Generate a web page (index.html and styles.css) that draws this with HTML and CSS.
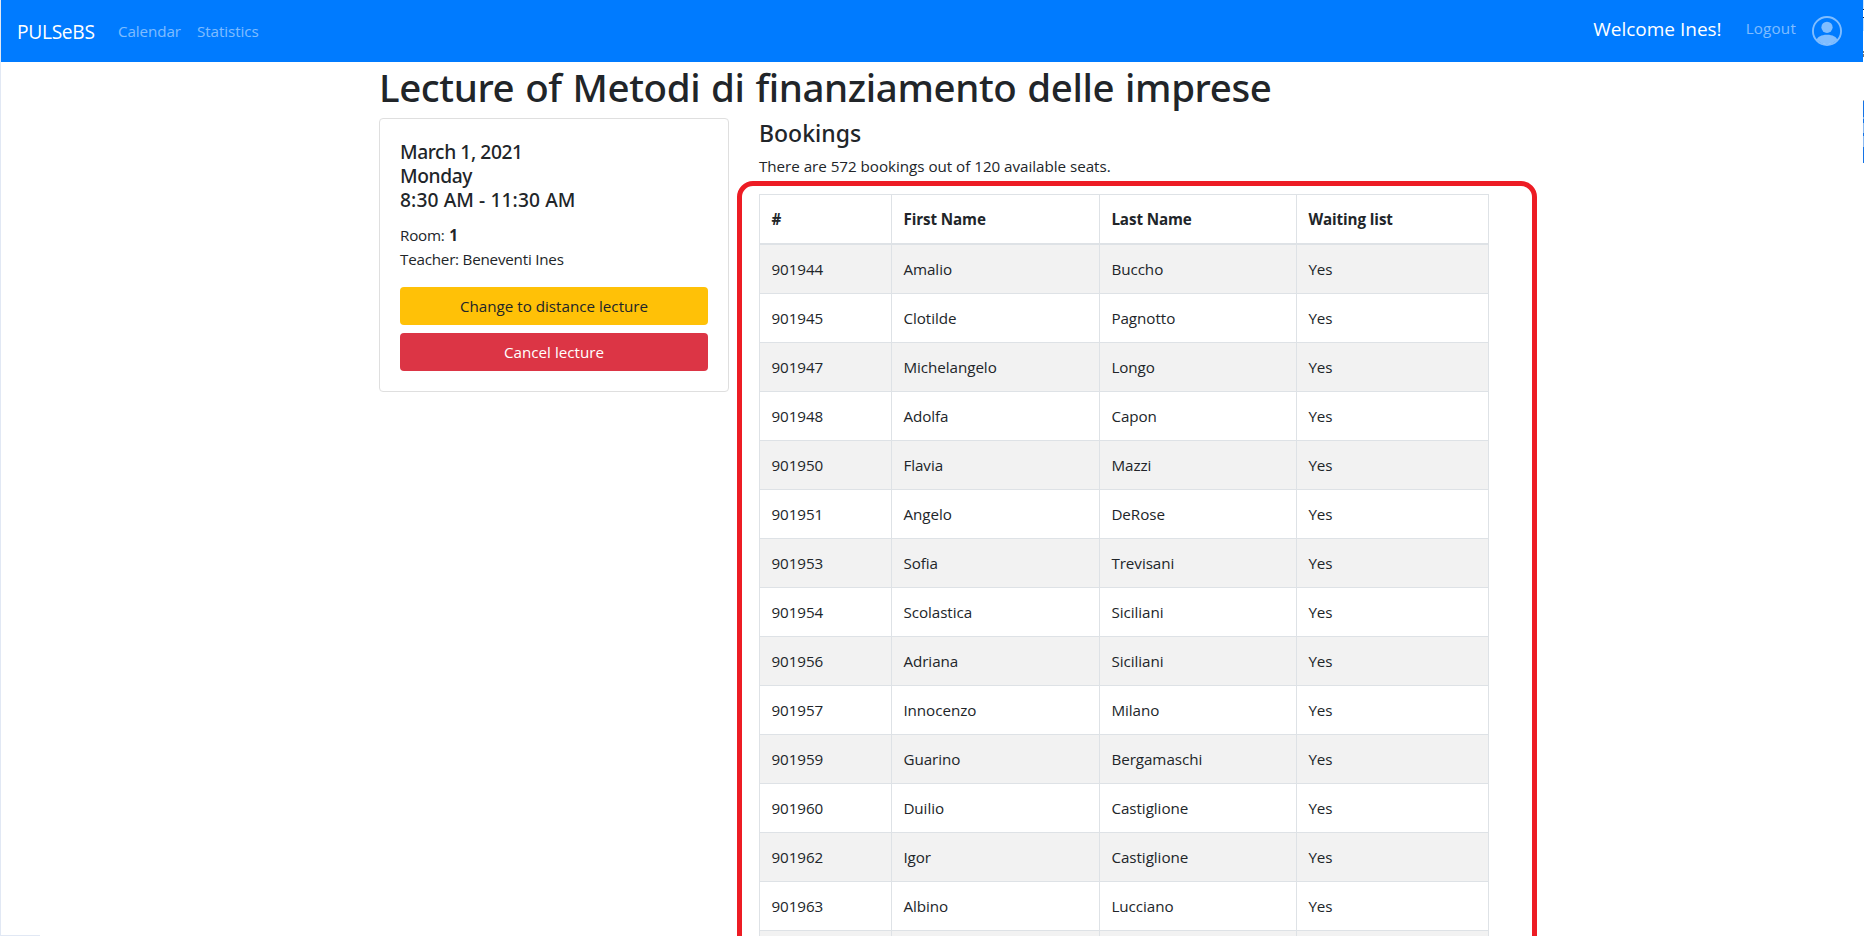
FILE: index.html
```
<!DOCTYPE html>
<html lang="en">
<head>
<meta charset="utf-8">
<title>PULSeBS</title>
<link rel="stylesheet" href="styles.css">
</head>
<body>
<div class="page">
  <nav class="navbar">
    <a class="brand">PULSeBS</a>
    <a class="nav-link">Calendar</a>
    <a class="nav-link">Statistics</a>
    <div class="user">
      <span class="welcome">Welcome Ines!</span>
      <a class="logout">Logout</a>
      <svg class="avatar" viewBox="0 0 16 16" width="30" height="30" fill="currentColor">
        <path d="M13.468 12.37C12.758 11.226 11.195 10 8 10s-4.757 1.225-5.468 2.37A6.987 6.987 0 0 0 8 15a6.987 6.987 0 0 0 5.468-2.63z"/>
        <path fill-rule="evenodd" d="M8 9a3 3 0 1 0 0-6 3 3 0 0 0 0 6z"/>
        <path fill-rule="evenodd" d="M8 1a7 7 0 1 0 0 14A7 7 0 0 0 8 1zM0 8a8 8 0 1 1 16 0A8 8 0 0 1 0 8z"/>
      </svg>
    </div>
  </nav>
  <main class="container">
    <h1>Lecture of Metodi di finanziamento delle imprese</h1>
    <div class="row">
      <aside class="card">
        <h5><span class="date">March 1, 2021</span><br><span class="date">Monday</span><br>8:30 AM - 11:30 AM</h5>
        <p class="info">Room: <b>1</b><br>Teacher: Beneventi Ines</p>
        <button class="btn btn-warning">Change to distance lecture</button>
        <button class="btn btn-danger">Cancel lecture</button>
      </aside>
      <section class="bookings">
        <h4>Bookings</h4>
        <p>There are 572 bookings out of 120 available seats.</p>
        <table>
          <colgroup><col class="c1"><col class="c2"><col class="c3"><col class="c4"></colgroup>
          <thead><tr><th>#</th><th>First Name</th><th>Last Name</th><th>Waiting list</th></tr></thead>
          <tbody>
            <tr><td>901944</td><td>Amalio</td><td>Buccho</td><td>Yes</td></tr>
            <tr><td>901945</td><td>Clotilde</td><td>Pagnotto</td><td>Yes</td></tr>
            <tr><td>901947</td><td>Michelangelo</td><td>Longo</td><td>Yes</td></tr>
            <tr><td>901948</td><td>Adolfa</td><td>Capon</td><td>Yes</td></tr>
            <tr><td>901950</td><td>Flavia</td><td>Mazzi</td><td>Yes</td></tr>
            <tr><td>901951</td><td>Angelo</td><td>DeRose</td><td>Yes</td></tr>
            <tr><td>901953</td><td>Sofia</td><td>Trevisani</td><td>Yes</td></tr>
            <tr><td>901954</td><td>Scolastica</td><td>Siciliani</td><td>Yes</td></tr>
            <tr><td>901956</td><td>Adriana</td><td>Siciliani</td><td>Yes</td></tr>
            <tr><td>901957</td><td>Innocenzo</td><td>Milano</td><td>Yes</td></tr>
            <tr><td>901959</td><td>Guarino</td><td>Bergamaschi</td><td>Yes</td></tr>
            <tr><td>901960</td><td>Duilio</td><td>Castiglione</td><td>Yes</td></tr>
            <tr><td>901962</td><td>Igor</td><td>Castiglione</td><td>Yes</td></tr>
            <tr><td>901963</td><td>Albino</td><td>Lucciano</td><td>Yes</td></tr>
            <tr><td></td><td></td><td></td><td></td></tr>
          </tbody>
        </table>
        <div class="highlight"></div>
      </section>
    </div>
  </main>
  <div class="edge"></div>
  <div class="status"></div>
</div>
</body>
</html>
```
FILE: styles.css
```
* { box-sizing: border-box; }
body {
  margin: 0;
  background: #fff;
  color: #212529;
  font: 400 15.2px/24px "Open Sans", "Noto Sans", sans-serif;
}
.page {
  position: relative;
  width: 1864px;
  height: 936px;
  overflow: hidden;
  border-left: 1px solid #e1e8f4;
}
.navbar {
  display: flex;
  align-items: center;
  width: 1862px;
  height: 62px;
  padding: 0 21px 0 16px;
  background: #007bff;
  color: rgba(255, 255, 255, .5);
}
.brand {
  width: 101px;
  padding-top: 2px;
  color: #fff;
  font-size: 19.2px;
  letter-spacing: -.3px;
}
.nav-link { width: 79px; letter-spacing: -.08px; }
.user {
  display: flex;
  align-items: center;
  margin-left: auto;
}
.welcome {
  margin: -5px 24px 0 0;
  color: #fff;
  font-size: 19px;
}
.logout {
  margin: -7px 16px 0 0;
  letter-spacing: .2px;
}
.avatar { display: block; }
.container {
  width: 1140px;
  margin: 0 0 0 363px;
  padding: 0 15px;
}
h1, h4, h5 {
  margin: 0;
  font-family: "Noto Sans", "Open Sans", sans-serif;
  font-weight: 500;
}
h1 {
  font-size: 38.5px;
  line-height: 48px;
  letter-spacing: -.4px;
  word-spacing: 1.3px;
  padding-top: 1px;
  margin-bottom: 7px;
  white-space: nowrap;
}
.row {
  display: flex;
  align-items: flex-start;
  gap: 30px;
}
.card {
  width: 350px;
  padding: 20px;
  border: 1px solid #dfdfdf;
  border-radius: 4px;
}
h5 {
  font-size: 19.2px;
  line-height: 24px;
  letter-spacing: .1px;
  padding-top: 1px;
  margin-bottom: 11px;
}
.date { letter-spacing: -.4px; }
.info { margin: 0 0 16px; letter-spacing: -.22px; }
.info b { margin-left: 1px; }
.btn {
  display: block;
  width: 100%;
  height: 38px;
  border: 0;
  border-radius: 4px;
  font: inherit;
  padding: 0;
}
.btn-warning { background: #ffc107; color: #212529; margin-bottom: 8px; }
.btn-danger { background: #dc3545; color: #fff; }
.bookings { position: relative; width: 730px; }
h4 {
  font-size: 23px;
  line-height: 28px;
  padding-top: 1px;
  margin-bottom: 7px;
}
.bookings p { margin: 0 0 16px; letter-spacing: -.03px; }
table {
  width: 730px;
  table-layout: fixed;
  border-collapse: collapse;
}
.c1 { width: 132px; }
.c2 { width: 208px; }
.c3 { width: 197px; }
.c4 { width: 192px; }
th, td {
  height: 49px;
  padding: 12px 12px 12px 11.4px;
  border: 1px solid #dee2e6;
  text-align: left;
  vertical-align: top;
}
th { border-bottom-width: 2px; letter-spacing: -.1px; }
td { letter-spacing: -.05px; }
tbody tr:nth-child(odd) { background: #f2f2f2; }
/* hand-drawn style marker frame over the table */
.highlight {
  position: absolute;
  left: -22px;
  top: 63px;
  width: 800px;
  height: 900px;
  border: 5px solid #ed1c24;
  border-radius: 16px;
}
/* slivers of the neighbouring window along the right and bottom edges */
.edge {
  position: absolute;
  right: 0;
  top: 0;
  width: 1px;
  height: 163px;
  background: linear-gradient(#cfe5fb 0 9px, #223 9px 10px, #fff 10px 17px, #223 17px 18px, #cfe5fb 18px 31px, #fff 31px 51px, #777 51px 53px, #fff 53px 54px, #777 54px 57px, #fff 57px 100px, #aaa 100px 101px, #1473e6 101px 117px, #7fb2f0 117px 119px, #1473e6 119px 123px, #8ab9f1 123px 133px, #1473e6 133px 136px, #8ab9f1 136px 147px, #1473e6 147px 163px);
}
.status {
  position: absolute;
  left: 0;
  bottom: 0;
  width: 39px;
  height: 1px;
  background: #e1e8f4;
}
```
